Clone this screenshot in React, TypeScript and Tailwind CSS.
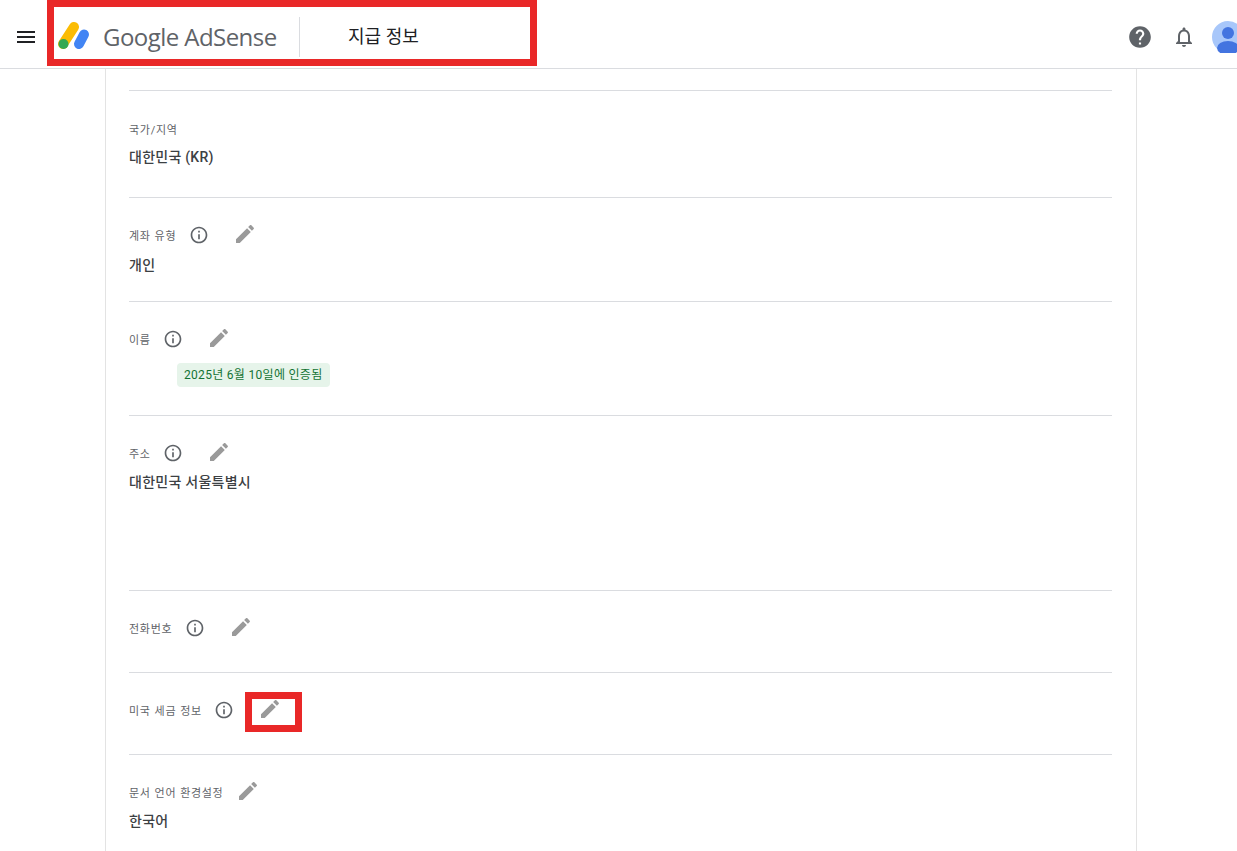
import React from 'react';

const KR = 'font-["Roboto","Noto_Sans_CJK_KR",sans-serif]';
const labelClass = 'pt-[4px] text-[11px] tracking-[0.7px] [word-spacing:0.5px] text-[#5f6368]';

const InfoIcon = () => (
  <svg width="20" height="20" viewBox="0 0 24 24" fill="#5f6368" className="shrink-0">
    <path d="M11 7h2v2h-2zm0 4h2v6h-2zm1-9C6.48 2 2 6.48 2 12s4.48 10 10 10 10-4.48 10-10S17.52 2 12 2zm0 18c-4.41 0-8-3.59-8-8s3.59-8 8-8 8 3.59 8 8-3.59 8-8 8z" />
  </svg>
);

const PencilIcon = () => (
  <svg width="24" height="24" viewBox="0 0 24 24" fill="#9a9a9a" className="mb-[2px] shrink-0">
    <path d="M3 17.25V21h3.75L17.81 9.94l-3.75-3.75L3 17.25zM20.71 7.04c.39-.39.39-1.02 0-1.41l-2.34-2.34c-.39-.39-1.02-.39-1.41 0l-1.83 1.83 3.75 3.75 1.83-1.83z" />
  </svg>
);

type RowProps = {
  label: string;
  height: string;
  top?: string;
  children?: React.ReactNode;
};

// rows with the info + pencil pair after the label
const Row = ({ label, height, top = 'pt-[25px]', children }: RowProps) => (
  <div className={`border-b border-[#dadce0] ${top} ${height}`}>
    <div className="flex h-6 items-center">
      <span className={labelClass}>{label}</span>
      <span className="ml-[12.5px]">
        <InfoIcon />
      </span>
      <span className="ml-[24px]">
        <PencilIcon />
      </span>
    </div>
    {children}
  </div>
);

const Value = ({ top, children }: { top: string; children: React.ReactNode }) => (
  <div className={`${top} text-[14px] leading-[20px] font-medium tracking-[0.25px] text-[#3c4043]`}>{children}</div>
);

export default function App() {
  return (
    <div className={`relative h-screen overflow-hidden bg-white ${KR}`}>
      <header className="flex h-[69px] items-center border-b border-[#dadce0] pt-[5px]">
        <svg width="24" height="24" viewBox="0 0 24 24" fill="#202124" className="ml-[14px] shrink-0">
          <path d="M3 18h18v-2H3v2zm0-5h18v-2H3v2zm0-7v2h18V6H3z" />
        </svg>
        <svg width="36" height="34" viewBox="0 0 36 34" className="mt-[-1px] ml-[20px] shrink-0">
          <line x1="5" y1="25" x2="16" y2="8" stroke="#fbbc04" strokeWidth="10" strokeLinecap="round" />
          <circle cx="5.5" cy="25" r="5" fill="#34a853" />
          <line x1="21" y1="25" x2="26" y2="15.5" stroke="#4285f4" strokeWidth="10" strokeLinecap="round" />
        </svg>
        <span className="ml-[9px] font-['Open_Sans',sans-serif] text-[24px] leading-none tracking-[-0.55px] whitespace-nowrap text-[#5f6368]">
          Google AdSense
        </span>
        <div className="ml-[22px] h-10 w-px bg-[#dadce0]" />
        <span className="ml-[48.5px] text-[18px] text-[#202124]">지급 정보</span>
        <div className="mr-[-7px] ml-auto flex items-center">
          <svg width="26" height="26" viewBox="0 0 24 24" fill="#5f6368" className="shrink-0">
            <path d="M12 2C6.48 2 2 6.48 2 12s4.48 10 10 10 10-4.48 10-10S17.52 2 12 2zm1 17h-2v-2h2v2zm2.07-7.75l-.9.92C13.45 12.9 13 13.5 13 15h-2v-.5c0-1.1.45-2.1 1.17-2.83l1.24-1.26c.37-.36.59-.86.59-1.41 0-1.1-.9-2-2-2s-2 .9-2 2H8c0-2.21 1.79-4 4-4s4 1.79 4 4c0 .88-.36 1.68-.93 2.25z" />
          </svg>
          <svg width="24" height="24" viewBox="0 0 24 24" fill="#5f6368" className="ml-[19px] shrink-0">
            <path d="M12 22c1.1 0 2-.9 2-2h-4c0 1.1.9 2 2 2zm6-6v-5c0-3.07-1.63-5.64-4.5-6.32V4c0-.83-.67-1.5-1.5-1.5s-1.5.67-1.5 1.5v.68C7.64 5.36 6 7.92 6 11v5l-2 2v1h16v-1l-2-2zm-2 1H8v-6c0-2.48 1.51-4.5 4-4.5s4 2.02 4 4.5v6z" />
          </svg>
          <svg width="32" height="32" viewBox="0 0 32 32" className="ml-[16px] shrink-0">
            <circle cx="16" cy="16" r="16" fill="#a8c7fa" />
            <circle cx="16" cy="12" r="6" fill="#4374e0" />
            <ellipse cx="16" cy="27" rx="11" ry="7" fill="#4374e0" />
          </svg>
        </div>
      </header>

      <main className="ml-[105px] h-full w-[1032px] border-x border-[#e3e3e3] pr-[24px] pl-[23px]">
        <div className="h-[22px] border-b border-[#dadce0]" />
        <div className="h-[107px] border-b border-[#dadce0] pt-[26px]">
          <div className="flex h-6 items-center">
            <span className={labelClass}>국가/지역</span>
          </div>
          <Value top="mt-[6px]">대한민국 (KR)</Value>
        </div>
        <Row label="계좌 유형" height="h-[104px]">
          <Value top="mt-[8px]">개인</Value>
        </Row>
        <Row label="이름" height="h-[114px]">
          <div className="mt-[12px] ml-[48px] inline-block rounded-[4px] bg-[#e6f4ea] px-[7px] text-[12px] leading-[24px] tracking-[0.3px] text-[#137333]">
            2025년 6월 10일에 인증됨
          </div>
        </Row>
        <Row label="주소" height="h-[175px]">
          <Value top="mt-[7px]">대한민국 서울특별시</Value>
        </Row>
        <Row label="전화번호" height="h-[82px]" />
        <Row label="미국 세금 정보" height="h-[82px]" />
        <div className="pt-[25px]">
          <div className="flex h-6 items-center">
            <span className={labelClass}>문서 언어 환경설정</span>
            <span className="ml-[12.5px]">
              <PencilIcon />
            </span>
          </div>
          <Value top="mt-[7px]">한국어</Value>
        </div>
      </main>

      {/* red annotation boxes drawn over the screenshot */}
      <div className="absolute top-0 left-[47px] h-[66px] w-[490px] border-[7px] border-[#e92828]" />
      <div className="absolute top-[692px] left-[245px] h-[40px] w-[57px] border-[7px] border-[#e92828]" />
    </div>
  );
}
